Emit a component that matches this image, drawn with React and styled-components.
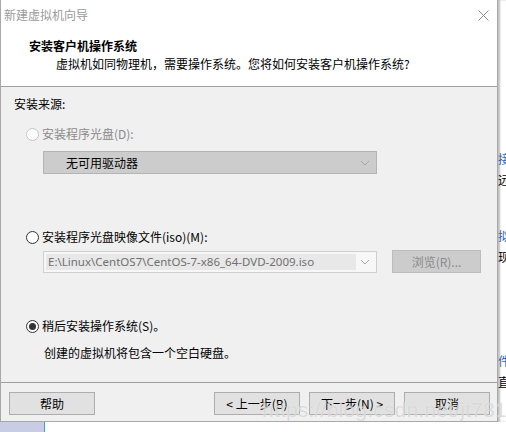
import React from "react";
import styled, { createGlobalStyle } from "styled-components";

const Global = createGlobalStyle`
  body {
    margin: 0;
    background: #ffffff;
    font-family: "Noto Sans CJK SC", "Microsoft YaHei", sans-serif;
    font-size: 12px;
  }
`;

const Screen = styled.div`
  width: 506px;
  height: 432px;
  position: relative;
  overflow: hidden;
  display: grid;
  grid-template-columns: 498px 8px;
  grid-template-rows: 422px 10px;
`;

const Dialog = styled.div`
  box-sizing: border-box;
  border: 1px solid #a8a8a8;
  border-top: none;
  background: #f0f0f0;
  display: flex;
  flex-direction: column;
`;

const TitleBar = styled.div`
  height: 30px;
  background: #fff;
  display: flex;
  align-items: center;
  justify-content: space-between;
  padding: 0 8px 2px 3px;
  color: #9a9a9a;
  line-height: 14px;
`;

const Header = styled.div`
  height: 55px;
  background: #fff;
  border-bottom: 1px solid #a0a0a0;
  padding: 7px 0 0 28px;
  box-sizing: border-box;
  color: #000;
`;

const Heading = styled.div`
  font-weight: bold;
  line-height: 14px;
`;

const Sub = styled.div`
  line-height: 14px;
  margin: 4px 0 0 27px;
`;

const Body = styled.div`
  height: 296px;
  box-sizing: border-box;
  padding: 10px 0 0 13px;
  border-bottom: 1px solid #a0a0a0;
`;

const Label = styled.div`
  line-height: 14px;
  color: ${(p) => (p.$dim ? "#8a8a8a" : "#000")};
  margin-top: ${(p) => p.$mt || 0}px;
  margin-left: ${(p) => p.$ml || 0}px;
`;

const RadioRow = styled.div`
  display: flex;
  align-items: center;
  gap: 3px;
  margin: ${(p) => p.$mt}px 0 0 12px;
  line-height: 14px;
  color: ${(p) => (p.$dim ? "#8a8a8a" : "#000")};
`;

const Radio = styled.span`
  width: 13px;
  height: 13px;
  box-sizing: border-box;
  border-radius: 50%;
  border: 1px solid ${(p) => (p.$dim ? "#c4c4c4" : "#333")};
  background: #fff;
  display: flex;
  align-items: center;
  justify-content: center;
  &::after {
    content: "";
    display: ${(p) => (p.$on ? "block" : "none")};
    width: 7px;
    height: 7px;
    border-radius: 50%;
    background: #333;
  }
`;

const FieldRow = styled.div`
  display: flex;
  align-items: center;
  gap: 15px;
  margin: ${(p) => p.$mt}px 0 0 29px;
`;

const Select = styled.div`
  width: 334px;
  height: ${(p) => p.$h}px;
  box-sizing: border-box;
  border: 1px solid ${(p) => (p.$dark ? "#b4b4b4" : "#cfcfcf")};
  background: ${(p) => (p.$dark ? "#cccccc" : "#f7f7f7")};
  display: flex;
  align-items: stretch;
  padding: 2px;
`;

const SelectText = styled.div`
  flex: 1;
  display: flex;
  align-items: center;
  padding-left: ${(p) => p.$pl}px;
  color: ${(p) => (p.$dark ? "#000" : "#707070")};
  background: ${(p) => (p.$dark ? "transparent" : "#e8e8e8")};
  font-family: ${(p) => (p.$dark ? "inherit" : '"Noto Sans", "Noto Sans CJK SC", sans-serif')};
  font-size: ${(p) => (p.$dark ? 12 : 11.5)}px;
  white-space: nowrap;
`;

const Chevron = styled.div`
  width: 18px;
  display: flex;
  align-items: center;
  justify-content: center;
`;

const Browse = styled.div`
  width: 89px;
  height: 23px;
  box-sizing: border-box;
  border: 1px solid #bdbdbd;
  background: #cccccc;
  color: #8a8a8a;
  display: flex;
  align-items: center;
  justify-content: center;
`;

const Footer = styled.div`
  flex: 1;
  display: flex;
  align-items: flex-start;
  padding: 9px 6px 0 8px;
`;

const Button = styled.div`
  width: 86px;
  height: 23px;
  box-sizing: border-box;
  border: 1px solid #adadad;
  background: #e1e1e1;
  display: flex;
  align-items: center;
  justify-content: center;
  margin-left: ${(p) => p.$ml || 0}px;
  color: #000;
`;

const Side = styled.div`
  background: #fff;
  box-shadow: inset 2px 0 2px rgba(0, 0, 0, 0.25);
  display: flex;
  flex-direction: column;
  padding-top: 152px;
  overflow: hidden;
`;

const SideChar = styled.div`
  line-height: 14px;
  height: 14px;
  margin-top: ${(p) => p.$mt}px;
  color: ${(p) => (p.$blue ? "#2f63b0" : "#000")};
  white-space: nowrap;
`;

const Bottom = styled.div`
  grid-column: 1 / 3;
  display: flex;
  box-shadow: inset 0 2px 2px rgba(0, 0, 0, 0.2);
`;

const Taskbar = styled.div`
  width: 44px;
  background: #c8cce4;
  border-right: 1px solid #4a9bd0;
`;

const Blank = styled.div`
  flex: 1;
  background: #fff;
`;

const Watermark = styled.div`
  position: absolute;
  left: 262px;
  top: 398px;
  font-family: "Liberation Sans", Arial, sans-serif;
  font-size: 21px;
  color: rgba(190, 190, 190, 0.55);
  text-shadow: 0 0 1px rgba(255, 255, 255, 0.8);
  letter-spacing: 0.2px;
  white-space: nowrap;
  pointer-events: none;
`;

const Down = () => (
  <svg width="10" height="6" viewBox="0 0 10 6">
    <path d="M1 1 L5 5 L9 1" fill="none" stroke="#a8a8a8" strokeWidth="1" />
  </svg>
);

export default function App() {
  return (
    <>
      <Global />
      <Screen>
        <Dialog>
          <TitleBar>
            <span>新建虚拟机向导</span>
            <svg width="11" height="11" viewBox="0 0 11 11">
              <path d="M0.5 0.5 L10.5 10.5 M10.5 0.5 L0.5 10.5" stroke="#8a8a8a" strokeWidth="1" />
            </svg>
          </TitleBar>
          <Header>
            <Heading>安装客户机操作系统</Heading>
            <Sub>虚拟机如同物理机，需要操作系统。您将如何安装客户机操作系统?</Sub>
          </Header>
          <Body>
            <Label>安装来源:</Label>
            <RadioRow $mt={16} $dim>
              <Radio $dim />
              安装程序光盘(D):
            </RadioRow>
            <FieldRow $mt={10}>
              <Select $h={23} $dark>
                <SelectText $dark $pl={20}>无可用驱动器</SelectText>
                <Chevron><Down /></Chevron>
              </Select>
            </FieldRow>
            <RadioRow $mt={56}>
              <Radio />
              安装程序光盘映像文件(iso)(M):
            </RadioRow>
            <FieldRow $mt={6}>
              <Select $h={22}>
                <SelectText $pl={2}>E:\Linux\CentOS7\CentOS-7-x86_64-DVD-2009.iso</SelectText>
                <Chevron><Down /></Chevron>
              </Select>
              <Browse>浏览(R)...</Browse>
            </FieldRow>
            <RadioRow $mt={46}>
              <Radio $on />
              稍后安装操作系统(S)。
            </RadioRow>
            <Label $mt={13} $ml={30}>创建的虚拟机将包含一个空白硬盘。</Label>
          </Body>
          <Footer>
            <Button>帮助</Button>
            <Button $ml={119}>&lt; 上一步(B)</Button>
            <Button $ml={9}>下一步(N) &gt;</Button>
            <Button $ml={9}>取消</Button>
          </Footer>
        </Dialog>
        <Side>
          <SideChar $blue $mt={0}>接</SideChar>
          <SideChar $mt={7}>远</SideChar>
          <SideChar $blue $mt={42}>拟</SideChar>
          <SideChar $mt={7}>现</SideChar>
          <SideChar $blue $mt={90}>件</SideChar>
          <SideChar $mt={7}>直</SideChar>
        </Side>
        <Bottom>
          <Taskbar />
          <Blank />
        </Bottom>
        <Watermark>https://blog.csdn.net/jt781861965</Watermark>
      </Screen>
    </>
  );
}
